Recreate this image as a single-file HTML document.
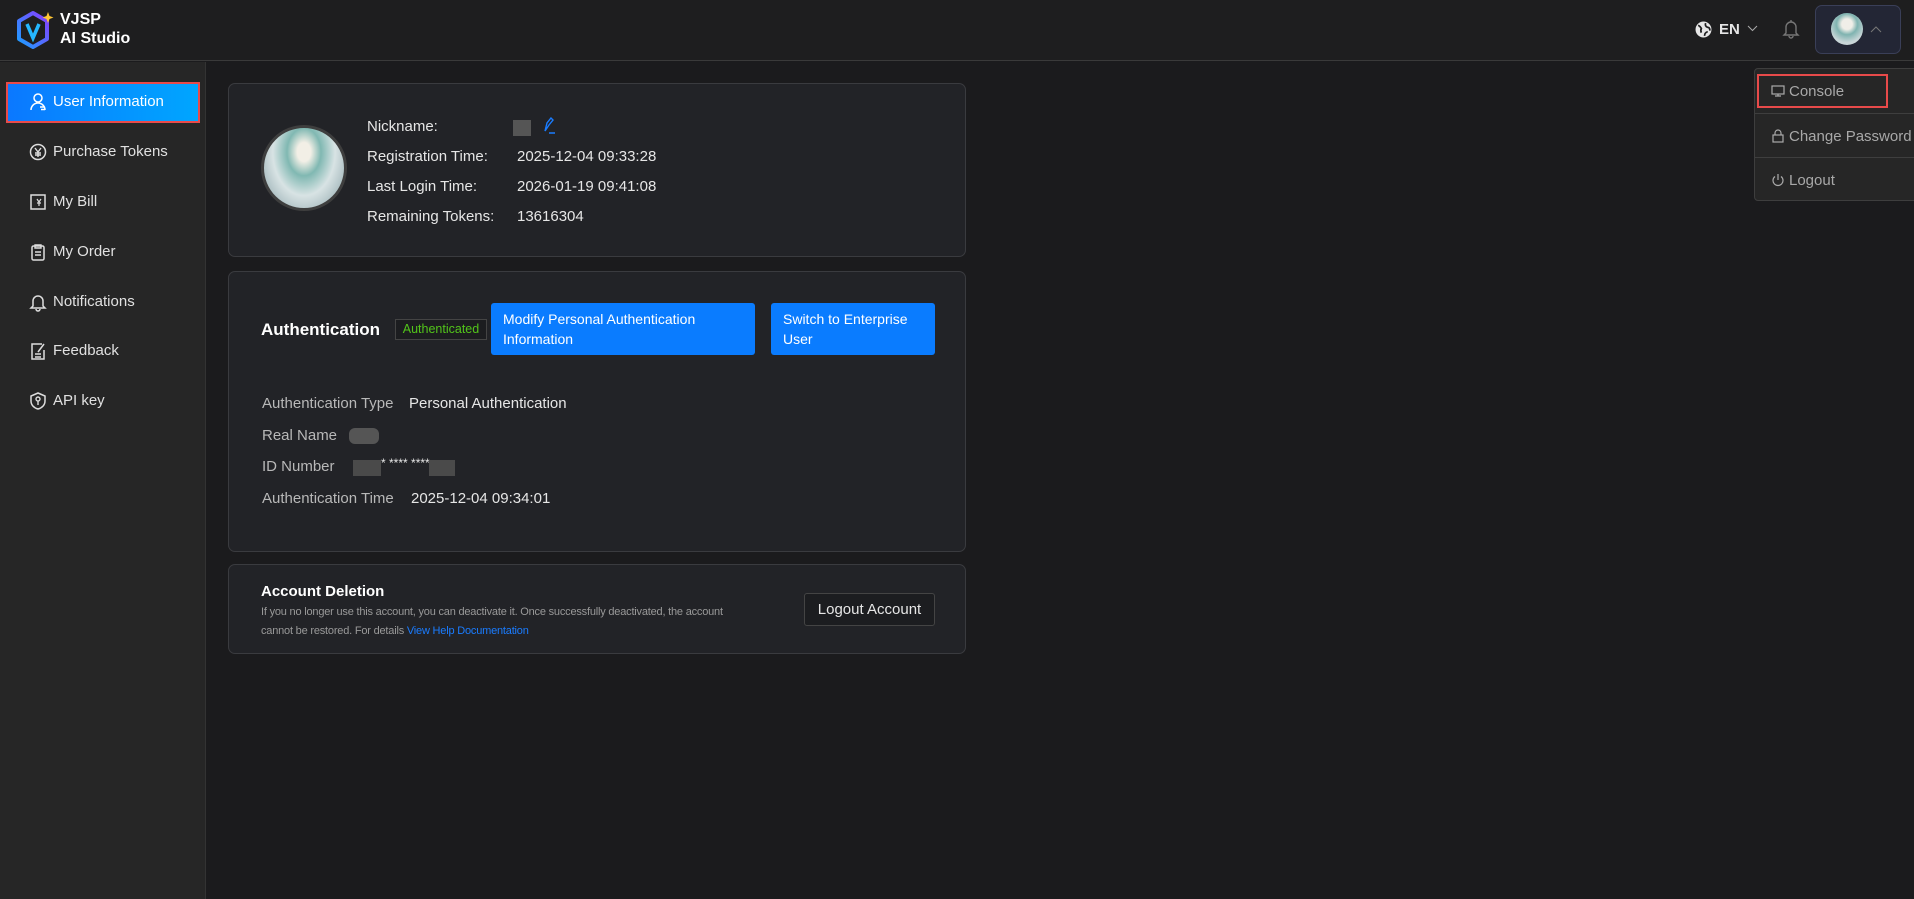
<!DOCTYPE html>
<html><head><meta charset="utf-8"><style>
*{box-sizing:border-box;margin:0;padding:0}
body{width:1914px;height:899px;overflow:hidden;background:#1b1b1d;font-family:"Liberation Sans",sans-serif;color:#e6e6e6;position:relative}
.hdr{position:absolute;left:0;top:0;width:1914px;height:61px;background:#1e1e1f;border-bottom:1px solid #3a3a3a}
.side{position:absolute;left:0;top:62px;width:206px;height:837px;background:#262626;border-right:1px solid #333}
.item{position:absolute;left:6px;width:194px;height:41px;font-size:15px;color:#e0e0e0}
.item svg{position:absolute;left:22px;top:10px;width:20px;height:20px}
.item span{position:absolute;left:47px;top:11px}
.act{background:linear-gradient(90deg,#0b78ff,#00a6ff);border:2px solid #e84a4a;color:#fff}
.act svg{top:8px;left:20px}.act span{top:9px;left:45px}
.card{position:absolute;left:228px;width:738px;background:#222327;border:1px solid #3a3b3f;border-radius:7px}
.abs{position:absolute;white-space:nowrap}
.lbl{font-size:15px;color:#e6e6e6}
.btn{position:absolute;background:#0a7cff;color:#fff;font-size:14px;border-radius:3px;padding:6px 12px;line-height:20px;white-space:normal}
.dd{position:absolute;left:1754px;top:68px;width:170px;height:133px;background:#262626;border:1px solid #3e3e3e;border-radius:4px}
.dd div{position:absolute;left:0;width:100%;height:45px;display:flex;align-items:center;padding-left:34px;font-size:15px;color:#a8a8a8}
.dd svg{position:absolute;left:16px;top:15px;width:14px;height:14px}
</style></head><body>
<div class="hdr">
<svg class="abs" style="left:12px;top:9px" width="44" height="44" viewBox="0 0 44 44"><defs><linearGradient id="g" x1="0" y1="1" x2="1" y2="0"><stop offset="0" stop-color="#1aa0ff"/><stop offset="1" stop-color="#8a3cff"/></linearGradient></defs><path d="M21 4 L35 12 L35 30 L21 38 L7 30 L7 12 Z" fill="none" stroke="url(#g)" stroke-width="4" stroke-linejoin="round"/><path d="M15 15 L21 29 L27 15" fill="none" stroke="#25b8ff" stroke-width="3.5"/><path d="M36 3 l1.5 4 4 1.5 -4 1.5 -1.5 4 -1.5 -4 -4 -1.5 4 -1.5z" fill="#ffc534"/></svg>
<div class="abs" style="left:60px;top:10px;font-weight:bold;font-size:16px;color:#fff;line-height:19px">VJSP<br>AI Studio</div>
<svg class="abs" style="left:1695px;top:21px" width="17" height="17" viewBox="0 0 16 16"><circle cx="8" cy="8" r="7.5" fill="#e6e6e6"/><path d="M3 4 q2 1 3 3 q-1 2 0 4 M10 2 q-1 3 2 4 q2 0 2 3 M9 14 q0-3 3-4" stroke="#1e1e1f" stroke-width="1.6" fill="none"/></svg>
<div class="abs" style="left:1719px;top:21px;font-weight:bold;font-size:15px;color:#e6e6e6">EN</div>
<svg class="abs" style="left:1747px;top:25px" width="11" height="8"><path d="M1 1l4.5 4.5L10 1" stroke="#aaa" fill="none"/></svg>
<svg class="abs" style="left:1782px;top:19px" width="18" height="20" viewBox="0 0 18 20"><path d="M4 14V8a5 5 0 0110 0v6l2 2H2z M7 17a2 2 0 004 0 M9 1v2" stroke="#777" stroke-width="1.4" fill="none"/></svg>
<div class="abs" style="left:1815px;top:5px;width:86px;height:49px;background:#232635;border:1px solid #3a3f58;border-radius:7px"></div>
<div class="abs" style="left:1831px;top:13px;width:32px;height:32px;border-radius:50%;background:radial-gradient(circle at 50% 35%,#f0eee8 0 20%,#7fb3b0 40%,#c9d6d8 70%)"></div>
<svg class="abs" style="left:1870px;top:25px" width="12" height="8"><path d="M1 7l5-5 5 5" stroke="#777" fill="none"/></svg>
</div>
<div class="side">
<div class="item act" style="top:20px"><svg viewBox="0 0 20 20"><circle cx="10" cy="6" r="4" stroke="#fff" stroke-width="1.5" fill="none"/><path d="M3 18a7 7 0 0114 0M12 15h5M13 17.5h4" stroke="#fff" stroke-width="1.5" fill="none"/></svg><span>User Information</span></div>
<div class="item" style="top:70px"><svg viewBox="0 0 20 20"><circle cx="10" cy="10" r="7.5" stroke="#ddd" stroke-width="1.5" fill="none"/><path d="M7 6l3 4 3-4M10 10v5M7 11h6M7 13h6" stroke="#ddd" stroke-width="1.4" fill="none"/></svg><span>Purchase Tokens</span></div>
<div class="item" style="top:120px"><svg viewBox="0 0 20 20"><rect x="3" y="3" width="14" height="14" stroke="#ddd" stroke-width="1.5" fill="none"/><path d="M9 7l2 3 2-3M11 10v4M9 11h4" stroke="#ddd" stroke-width="1.2" fill="none"/></svg><span>My Bill</span></div>
<div class="item" style="top:170px"><svg viewBox="0 0 20 20"><rect x="4" y="4" width="12" height="14" rx="1.5" stroke="#ddd" stroke-width="1.5" fill="none"/><path d="M7 3h6v3H7zM7 10h6M7 13h6" stroke="#ddd" stroke-width="1.4" fill="none"/></svg><span>My Order</span></div>
<div class="item" style="top:220px"><svg viewBox="0 0 20 20"><path d="M5 14V9a5 5 0 0110 0v5l2 2H3z M8 17a2 2 0 004 0" stroke="#ddd" stroke-width="1.5" fill="none"/></svg><span>Notifications</span></div>
<div class="item" style="top:269px"><svg viewBox="0 0 20 20"><path d="M14 3H4v15h12V9M7 13h6M7 16h6M10 11l6-8" stroke="#ddd" stroke-width="1.5" fill="none"/></svg><span>Feedback</span></div>
<div class="item" style="top:319px"><svg viewBox="0 0 20 20"><path d="M10 2l7 3v5c0 4-3 7-7 8-4-1-7-4-7-8V5z" stroke="#ddd" stroke-width="1.5" fill="none"/><circle cx="10" cy="8" r="2" stroke="#ddd" stroke-width="1.4" fill="none"/><path d="M10 10v4" stroke="#ddd" stroke-width="1.4"/></svg><span>API key</span></div>
</div>

<div class="card" style="top:83px;height:174px">
<div class="abs" style="left:32px;top:41px;width:86px;height:86px;border-radius:50%;border:3px solid #3e3e3e;background:radial-gradient(ellipse at 50% 30%,#f2efe6 0 12%,#80b8b2 30%,#d8e3e4 55%,#a9bcc0 80%)"></div>
<div class="abs lbl" style="left:138px;top:34px">Nickname:</div>
<div class="abs" style="left:284px;top:36px;width:18px;height:16px;background:#555"></div>
<svg class="abs" style="left:314px;top:33px" width="14" height="18"><path d="M2 14l2-8 4-5 2 2-4 5z M6 16h6" stroke="#1a7cff" stroke-width="1.4" fill="none"/></svg>
<div class="abs lbl" style="left:138px;top:64px">Registration Time:</div><div class="abs lbl" style="left:288px;top:64px">2025-12-04 09:33:28</div>
<div class="abs lbl" style="left:138px;top:94px">Last Login Time:</div><div class="abs lbl" style="left:288px;top:94px">2026-01-19 09:41:08</div>
<div class="abs lbl" style="left:138px;top:124px">Remaining Tokens:</div><div class="abs lbl" style="left:288px;top:124px">13616304</div>
</div>

<div class="card" style="top:271px;height:281px">
<div class="abs" style="left:32px;top:48px;font-weight:bold;font-size:17px;color:#fff">Authentication</div>
<div class="abs" style="left:166px;top:47px;width:92px;height:21px;border:1px solid #444;background:#1c1d20;color:#52c41a;font-size:12.5px;text-align:center;line-height:19px">Authenticated</div>
<div class="btn" style="left:262px;top:31px;width:264px;height:52px">Modify Personal Authentication Information</div>
<div class="btn" style="left:542px;top:31px;width:164px;height:52px">Switch to Enterprise User</div>
<div class="abs lbl" style="left:33px;top:123px;color:#b8b8b8">Authentication Type</div><div class="abs lbl" style="left:180px;top:123px">Personal Authentication</div>
<div class="abs lbl" style="left:33px;top:155px;color:#b8b8b8">Real Name</div><div class="abs" style="left:120px;top:156px;width:30px;height:16px;background:#555;border-radius:6px"></div>
<div class="abs lbl" style="left:33px;top:186px;color:#b8b8b8">ID Number</div><div class="abs" style="left:124px;top:188px;width:28px;height:16px;background:#4a4a4a"></div><div class="abs" style="left:152px;top:184px;font-size:12px">* **** ****</div><div class="abs" style="left:200px;top:188px;width:26px;height:16px;background:#4a4a4a"></div>
<div class="abs lbl" style="left:33px;top:218px;color:#b8b8b8">Authentication Time</div><div class="abs lbl" style="left:182px;top:218px">2025-12-04 09:34:01</div>
</div>

<div class="card" style="top:564px;height:90px">
<div class="abs" style="left:32px;top:18px;font-weight:bold;font-size:15px;color:#fff">Account Deletion</div>
<div class="abs" style="left:32px;top:38px;font-size:11px;color:#999;line-height:19px;white-space:normal;width:475px;letter-spacing:-0.2px">If you no longer use this account, you can deactivate it. Once successfully deactivated, the account cannot be restored. For details <span style="color:#1a7cff">View Help Documentation</span></div>
<div class="abs" style="left:575px;top:28px;width:131px;height:33px;border:1px solid #444;background:#1c1d20;border-radius:3px;font-size:15px;text-align:center;line-height:31px">Logout Account</div>
</div>

<div class="dd">
<div style="top:0"><svg viewBox="0 0 14 14"><rect x="1" y="2" width="12" height="8" stroke="#aaa" fill="none" stroke-width="1.2"/><path d="M4 12h6M7 10v2" stroke="#aaa" stroke-width="1.2"/></svg>Console</div>
<div style="top:44px;border-top:1px solid #3e3e3e"><svg viewBox="0 0 14 14"><rect x="2" y="6" width="10" height="7" stroke="#aaa" fill="none" stroke-width="1.2"/><path d="M4 6V4a3 3 0 016 0v2" stroke="#aaa" fill="none" stroke-width="1.2"/></svg>Change Password</div>
<div style="top:88px;border-top:1px solid #3e3e3e"><svg viewBox="0 0 14 14"><path d="M4 3.5a5 5 0 106 0M7 1v6" stroke="#aaa" fill="none" stroke-width="1.2"/></svg>Logout</div>
</div>
<div class="abs" style="left:1757px;top:74px;width:131px;height:34px;border:2px solid #e84a4a"></div>
</body></html>
